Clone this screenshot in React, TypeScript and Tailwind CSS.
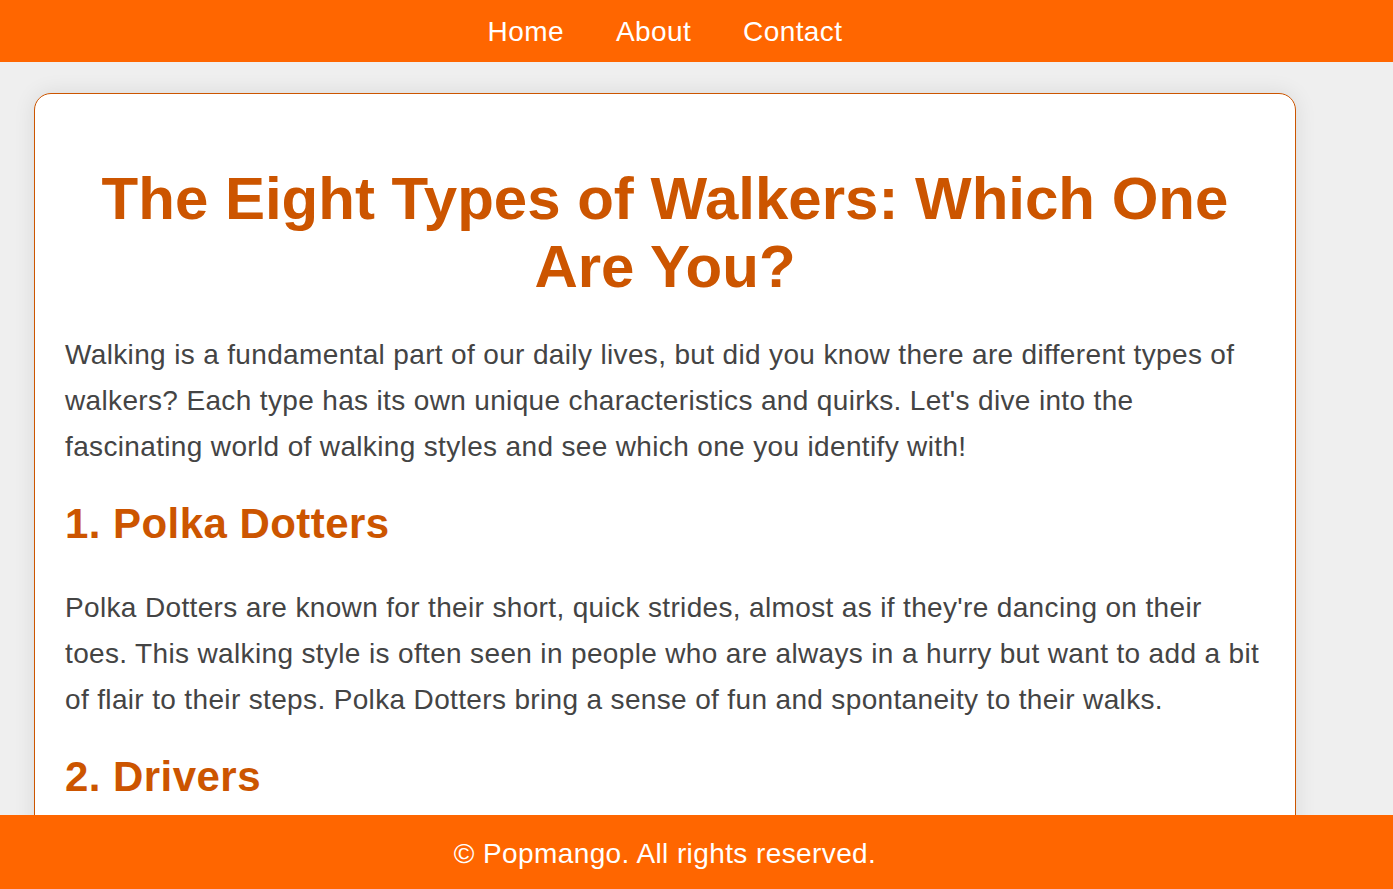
export default function App() {
  return (
    <div className="min-h-screen bg-[#efefef] text-[#444444] font-['Liberation_Sans',Arial,sans-serif]">
      {/* Header */}
      <header className="h-[62px] bg-[#ff6600]">
        <nav className="w-[1330px] h-full pt-[2px] flex items-center justify-center gap-[52px] text-[28px] tracking-[0.4px] text-white">
          <a href="#" className="leading-none">Home</a>
          <a href="#" className="leading-none">About</a>
          <a href="#" className="leading-none">Contact</a>
        </nav>
      </header>

      <div className="w-[1330px] pt-[31px] pb-[120px]">
        <article className="mx-[34px] bg-white border-[1.5px] border-[#cc5500] rounded-[17px] shadow-[0_0_22px_rgba(0,0,0,0.09)] px-[30px] pt-[30px] pb-[40px]">
          <h1 className="mt-[41px] text-center text-[60px] leading-[68px] font-bold text-[#cc5500]">
            The Eight Types of Walkers: Which One Are You?
          </h1>

          <p className="mt-[31px] text-[28px] leading-[46px] tracking-[0.35px]">
            Walking is a fundamental part of our daily lives, but did you know there are different types of walkers? Each type has its own unique characteristics and quirks. Let's dive into the fascinating world of walking styles and see which one you identify with!
          </p>

          <h2 className="mt-[30px] text-[42px] leading-[48px] font-bold tracking-[0.45px] text-[#cc5500]">1. Polka Dotters</h2>
          <p className="mt-[37px] text-[28px] leading-[46px] tracking-[0.35px]">
            Polka Dotters are known for their short, quick strides, almost as if they're dancing on their toes. This walking style is often seen in people who are always in a hurry but want to add a bit of flair to their steps. Polka Dotters bring a sense of fun and spontaneity to their walks.
          </p>

          <h2 className="mt-[30px] text-[42px] leading-[48px] font-bold tracking-[0.45px] text-[#cc5500]">2. Drivers</h2>
          <p className="mt-[37px] text-[28px] leading-[46px] tracking-[0.35px]">
            Drivers walk with purpose and determination. Their strides are long and steady, and they rarely stop to look around. Whether heading to work or running errands, Drivers always have a destination in mind.
          </p>
        </article>
      </div>

      {/* Footer */}
      <footer className="fixed bottom-0 left-0 right-0 h-[74px] bg-[#ff6600]">
        <div className="w-[1330px] h-full pt-[4px] flex items-center justify-center text-[28px] tracking-[0.4px] text-white">
          <p>© Popmango. All rights reserved.</p>
        </div>
      </footer>
    </div>
  );
}
